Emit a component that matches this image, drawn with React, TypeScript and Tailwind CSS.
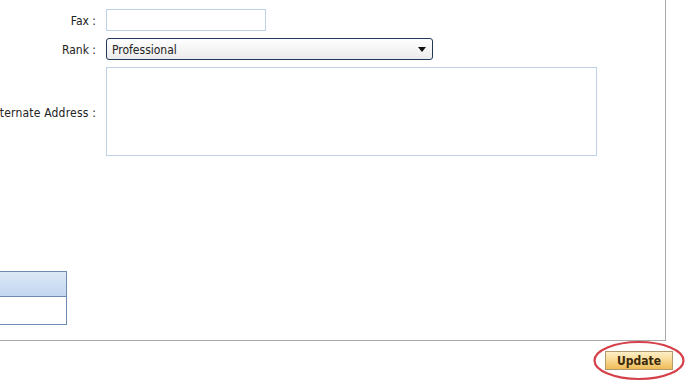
import React from "react";

export default function App() {
  return (
    <div className="relative w-[690px] h-[388px] overflow-hidden bg-white text-[12px] text-[#222] font-['Tahoma','DejaVu_Sans_Condensed','Liberation_Sans',sans-serif]">
      <div className="w-[666px] h-[341px] border-r border-b border-[#a9a9a9] flex flex-col">
        <div className="pt-[9px] grid grid-cols-[96px_1fr] gap-x-[10px] gap-y-[7px]">
          <div className="flex justify-end items-center pt-[2px] h-[22px] whitespace-nowrap">Fax :</div>
          <div>
            <div className="w-[160px] h-[22px] border border-[#bfd1e8] bg-white" />
          </div>

          <div className="flex justify-end items-center pt-[2px] h-[22px] whitespace-nowrap">Rank :</div>
          <div>
            <div className="w-[327px] h-[22px] border border-[#23395a] rounded-[3px] bg-gradient-to-b from-white to-[#ebebeb] flex items-center pl-[5px] pr-[6px] pt-[1px]">
              <span className="flex-1">Professional</span>
              <svg width="8" height="5" viewBox="0 0 8 5">
                <path d="M0 0 L8 0 L4 5 Z" fill="#111" />
              </svg>
            </div>
          </div>

          <div className="flex justify-end items-center pt-[2px] h-[89px] whitespace-nowrap tracking-[0.2px]">Alternate Address :</div>
          <div>
            <div className="w-[491px] h-[89px] border border-[#bfd1e8] bg-white" />
          </div>
        </div>

        <div className="mt-[115px] w-[67px] flex flex-col">
          <div className="h-[26px] border border-l-0 border-[#6e8bb0] bg-gradient-to-b from-[#dde8f7] to-[#c3d7f1]" />
          <div className="h-[28px] border border-l-0 border-t-0 border-[#6e8bb0] bg-white" />
        </div>
      </div>

      <div className="flex justify-end pr-[17px] pt-[10px]">
        <div className="relative">
          <button className="w-[68px] h-[19px] border border-[#b09a6e] bg-gradient-to-b from-[#fdeec6] via-[#f8d890] to-[#eebb55] text-[12px] font-bold text-[#3b2a0c] leading-none flex items-center justify-center">
            Update
          </button>
          <svg
            className="absolute left-[-13px] top-[-11px] pointer-events-none"
            width="94"
            height="41"
            viewBox="0 0 94 41"
          >
            <ellipse cx="47" cy="20.5" rx="44.5" ry="18.5" fill="none" stroke="#d5404a" strokeWidth="2.2" />
          </svg>
        </div>
      </div>
    </div>
  );
}
